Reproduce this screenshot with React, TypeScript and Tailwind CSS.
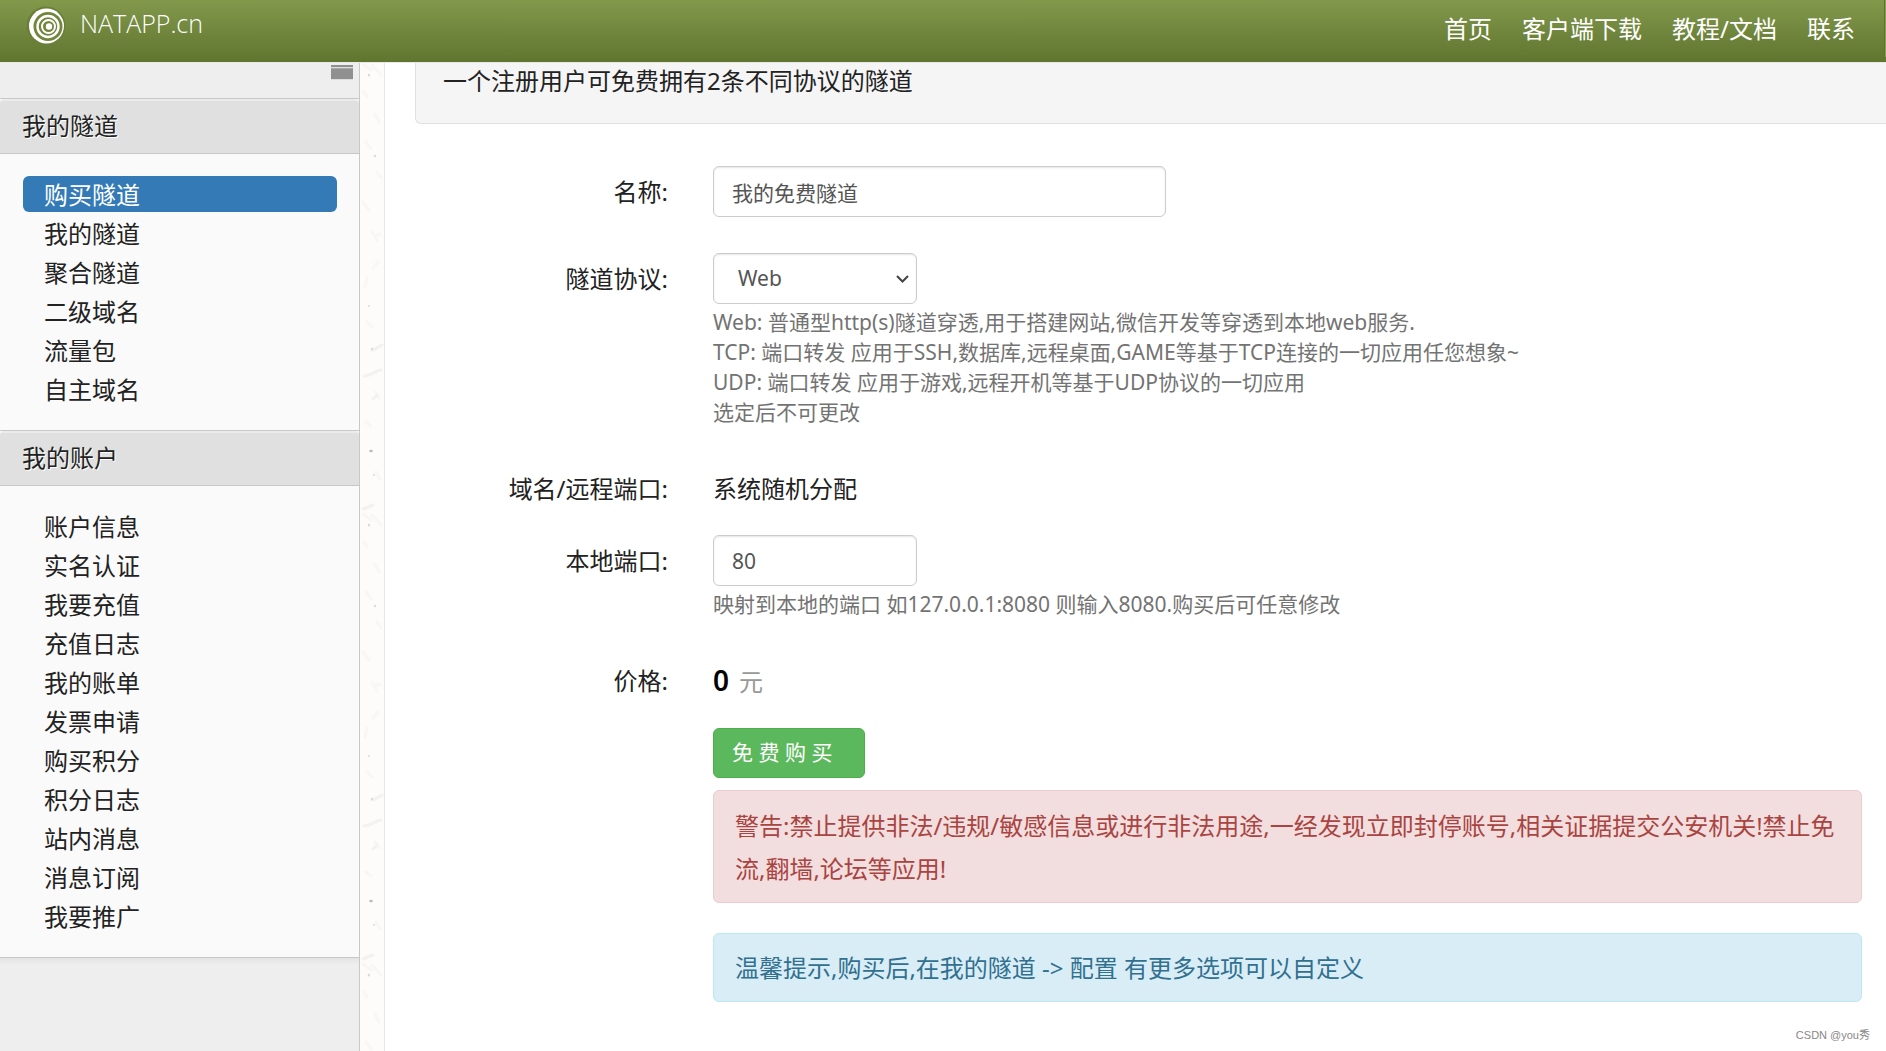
import { useState } from 'react'

const navLinks = ['首页', '客户端下载', '教程/文档', '联系']

const sections = [
	{ title: '我的隧道', items: ['购买隧道', '我的隧道', '聚合隧道', '二级域名', '流量包', '自主域名'] },
	{
		title: '我的账户',
		items: [
			'账户信息',
			'实名认证',
			'我要充值',
			'充值日志',
			'我的账单',
			'发票申请',
			'购买积分',
			'积分日志',
			'站内消息',
			'消息订阅',
			'我要推广',
		],
	},
]

const Logo = () => (
	<svg className="h-10 w-10" viewBox="0 0 40 40" fill="none">
		<circle cx="20" cy="20" r="19.5" fill="#6b7f38" />
		<circle cx="20.5" cy="20" r="17.5" fill="#fff" />
		<circle cx="22" cy="20.5" r="14.5" fill="#71863d" />
		<circle cx="22" cy="20.5" r="10.5" stroke="#fff" strokeWidth="2.4" />
		<circle cx="22.5" cy="20.5" r="6.5" stroke="#fff" strokeWidth="2" />
		<circle cx="23" cy="20.5" r="3.2" fill="#fff" />
	</svg>
)

const Header = () => (
	<header className="relative z-10 flex h-[62px] shrink-0 justify-between bg-linear-to-b from-[#82994c] to-[#60752f] pl-[26px] shadow-[0_1px_0_#e8e8e8]">
		<a href="#" className="flex h-[52px] items-center gap-[14px] text-[25px] font-light text-white">
			<Logo />
			<span className="pb-1 font-['Open_Sans',sans-serif]">NATAPP.cn</span>
		</a>
		<div className="flex">
			<nav className="flex h-[58px] items-center gap-[30px] pr-[29px] text-2xl text-white">
				{navLinks.map((link) => (
					<a key={link} href="#">
						{link}
					</a>
				))}
			</nav>
			<div className="h-[57px] w-[2px] border-l border-[#5f7330] bg-[#8ba255]" />
		</div>
	</header>
)

const Sidebar = () => {
	const [active, setActive] = useState('0-0')

	return (
		<aside className="w-[360px] shrink-0 border-r border-[#c8c8c8] bg-[#eee]">
			<div className="flex h-9 justify-end pr-[6px] pt-[3px]">
				<svg className="h-[15px] w-[22px]" viewBox="0 0 22 15">
					<rect width="22" height="15" fill="#ddd" />
					<path d="M0 0h22v2H0zM0 4h22v10H0z" fill="#909090" />
					<path d="M0 3h22v1H0z" fill="#aaa" />
				</svg>
			</div>
			{sections.map((section, s) => (
				<section key={section.title} className="border-t border-[#c8c8c8] bg-[#fafafa]">
					<h2 className="h-[55px] rounded-t border-b border-t-2 border-b-[#c8c8c8] border-t-[#ebebeb] bg-[#e0e0e0] pl-[22px] text-2xl leading-[50px] text-[#222] [text-shadow:1px_1px_0_#fff]">
						{section.title}
					</h2>
					<ul className="flex flex-col gap-[3px] px-[22px] pb-[23px] pl-[23px] pt-[22px]">
						{section.items.map((item, i) => (
							<li key={item}>
								<a
									href="#"
									onClick={() => setActive(`${s}-${i}`)}
									className={`block h-9 rounded-md pl-[21px] text-2xl leading-[38px] ${
										active === `${s}-${i}` ? 'bg-[#337ab7] text-white' : 'text-[#222]'
									}`}
								>
									{item}
								</a>
							</li>
						))}
					</ul>
				</section>
			))}
			<div className="h-2 border-t border-[#c8c8c8] bg-linear-to-b from-[#e4e4e4] to-[#eee]" />
		</aside>
	)
}

// speckled paper strip between the sidebar and the page
const Paper = () => (
	<svg className="h-full w-6 shrink-0" aria-hidden="true">
		<defs>
			<pattern id="paper" width="24" height="450" patternUnits="userSpaceOnUse">
				<rect width="24" height="450" fill="#fdfcfa" />
				<g fill="none" stroke="#f9f7f5" strokeWidth="3" strokeLinecap="round">
					<path d="M3 2l8 6M12 3l9 10M4 30l3 5M15 52l4 8M6 80l5 7M17 110l4 6M3 140l6 8M12 170l5 9M18 200l-5 6M5 225l2-9M20 172l-6 2M7 260l5 5M15 330l4 6M6 360l5 4M16 410l4 7" />
					<path d="M12 288c3 0 6-3 10-5M4 314c6 0 9-4 17-6M3 447l10-4M17 333l-4 4" stroke="#f4f2ef" />
				</g>
				<g fill="#dedbd8">
					<ellipse cx="9" cy="13" rx="1.2" ry="1.5" />
					<circle cx="15" cy="94" r="1.2" />
					<circle cx="9" cy="244" r="1" />
					<circle cx="12" cy="287" r="1.2" />
					<circle cx="14" cy="413" r="1" />
				</g>
				<ellipse cx="11" cy="389" rx="1.8" ry="1.2" fill="#bbb" />
			</pattern>
		</defs>
		<rect width="100%" height="100%" fill="url(#paper)" />
	</svg>
)

const Label = ({ htmlFor, children }: { htmlFor?: string; children: string }) => (
	<label htmlFor={htmlFor} className="w-[253px] shrink-0 text-right text-2xl leading-[51px] text-[#222]">
		{children}
	</label>
)

const TunnelForm = () => (
	<form className="pr-6 pt-[42px]" onSubmit={(e) => e.preventDefault()}>
		<div className="flex gap-[45px]">
			<Label htmlFor="name">名称:</Label>
			<input
				id="name"
				defaultValue="我的免费隧道"
				className="h-[51px] w-[453px] rounded-md border border-[#ccc] bg-white px-[18px] text-[21px] text-[#555] shadow-[inset_0_1px_2px_rgba(0,0,0,0.1)]"
			/>
		</div>

		<div className="mt-9 flex gap-[45px]">
			<Label htmlFor="protocol">隧道协议:</Label>
			<div>
				<div className="relative w-[204px]">
					<select
						id="protocol"
						className="h-[51px] w-full appearance-none rounded-md border border-[#ccc] bg-white px-6 text-[21px] text-[#555] shadow-[inset_0_1px_2px_rgba(0,0,0,0.1)]"
					>
						<option>Web</option>
						<option>TCP</option>
						<option>UDP</option>
					</select>
					<svg
						className="pointer-events-none absolute right-2 top-[22px] h-2 w-[13px]"
						viewBox="0 0 13 8"
						fill="none"
						stroke="#444"
						strokeWidth="2"
					>
						<path d="M1 1l5.5 5.5L12 1" />
					</svg>
				</div>
				<p className="mt-[3px] text-[21px] leading-[30px] text-[#737373]">
					Web: 普通型http(s)隧道穿透,用于搭建网站,微信开发等穿透到本地web服务.
					<br />
					TCP: 端口转发 应用于SSH,数据库,远程桌面,GAME等基于TCP连接的一切应用任您想象~
					<br />
					UDP: 端口转发 应用于游戏,远程开机等基于UDP协议的一切应用
					<br />
					选定后不可更改
				</p>
			</div>
		</div>

		<div className="mt-9 flex gap-[45px]">
			<Label>域名/远程端口:</Label>
			<p className="text-2xl leading-[51px] text-[#222]">系统随机分配</p>
		</div>

		<div className="mt-[21px] flex gap-[45px]">
			<Label htmlFor="port">本地端口:</Label>
			<div>
				<input
					id="port"
					defaultValue="80"
					className="block h-[51px] w-[204px] rounded-md border border-[#ccc] bg-white px-[18px] text-[21px] text-[#555] shadow-[inset_0_1px_2px_rgba(0,0,0,0.1)]"
				/>
				<p className="mt-[3px] text-[21px] leading-[30px] text-[#737373]">
					映射到本地的端口 如127.0.0.1:8080 则输入8080.购买后可任意修改
				</p>
			</div>
		</div>

		<div className="mt-9 flex gap-[45px]">
			<Label>价格:</Label>
			<p className="flex items-baseline gap-[10px] text-2xl leading-[51px] text-[#999]">
				<b className="text-[28px] font-semibold text-black">0</b>
				<span>元</span>
			</p>
		</div>

		<div className="mt-[21px] pl-[298px]">
			<button
				type="submit"
				className="block h-[50px] w-[152px] rounded-md border border-[#4cae4c] bg-[#5cb85c] px-[18px] text-left text-[21px] text-white"
			>
				免 费 购 买
			</button>
			<div className="mt-3 rounded-md border border-[#ebccd1] bg-[#f2dede] pb-3 pl-[21px] pr-4 pt-[13px] text-2xl leading-[43px] text-[#a94442]">
				警告:禁止提供非法/违规/敏感信息或进行非法用途,一经发现立即封停账号,相关证据提交公安机关!禁止免流,翻墙,论坛等应用!
			</div>
			<div className="mt-[30px] rounded-md border border-[#bce8f1] bg-[#d9edf7] py-3 pl-[21px] pr-4 text-2xl leading-[43px] text-[#31708f]">
				温馨提示,购买后,在我的隧道 -&gt; 配置 有更多选项可以自定义
			</div>
		</div>
	</form>
)

export default function App() {
	return (
		<div className="flex h-screen flex-col overflow-hidden bg-[#fdfcfa] font-['Noto_Sans','Noto_Sans_CJK_SC',sans-serif]">
			<Header />
			<div className="flex min-h-0 flex-1">
				<Sidebar />
				<Paper />
				<main className="relative min-w-0 flex-1 border-l border-[#e8e8e8] bg-white pl-[30px]">
					<div className="h-[62px] rounded-bl-md border-b border-l border-[#e0e0e0] bg-[#f5f5f5] pl-[27px] text-2xl leading-[38px] text-[#222]">
						一个注册用户可免费拥有2条不同协议的隧道
					</div>
					<TunnelForm />
					<span className="absolute bottom-[7px] right-4 font-['Liberation_Sans','Noto_Sans_CJK_SC',sans-serif] text-[11px] leading-[18px] text-[#888]">
						CSDN @you秀
					</span>
				</main>
			</div>
		</div>
	)
}
